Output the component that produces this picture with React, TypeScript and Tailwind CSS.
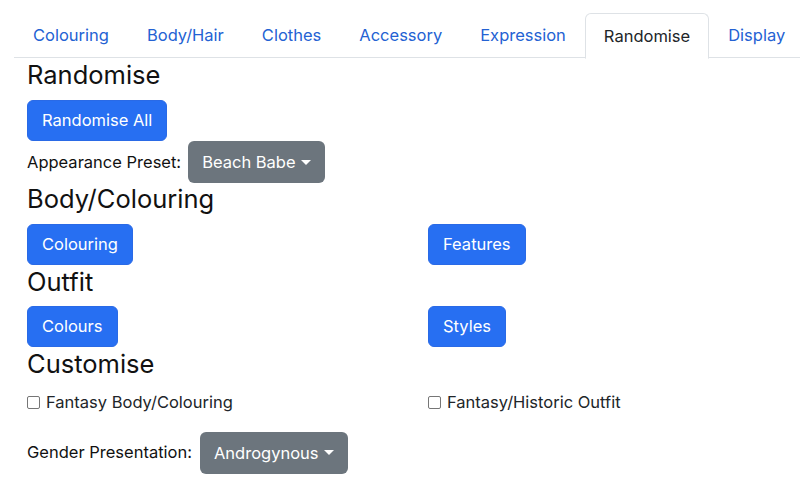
import React from "react";

const tabs = ["Colouring", "Body/Hair", "Clothes", "Accessory", "Expression", "Randomise", "Display"];

function Btn({ children }: { children: React.ReactNode }) {
  return (
    <button className="h-[41px] px-[14px] rounded-[6px] bg-[#276ff2] border border-[#2a6ae6] text-white text-[16.5px] leading-none">
      {children}
    </button>
  );
}

function Drop({ children }: { children: React.ReactNode }) {
  return (
    <button className="h-[42px] px-[14px] rounded-[6px] bg-[#6c757d] text-white text-[16.5px] leading-none flex items-center">
      {children}
      <span className="ml-[5px] inline-block w-0 h-0 border-l-[5px] border-r-[5px] border-t-[5px] border-l-transparent border-r-transparent border-t-white" />
    </button>
  );
}

function Check({ label }: { label: string }) {
  return (
    <label className="flex items-center text-[16.5px] text-[#212529]">
      <span className="w-[13px] h-[13px] border border-[#767676] rounded-[2px] mr-[6px] bg-white" />
      {label}
    </label>
  );
}

export default function App() {
  return (
    <div className="w-[800px] h-[490px] bg-white overflow-hidden pt-[13px] pl-[14px]" style={{ fontFamily: "Inter, 'Liberation Sans', sans-serif" }}>
      <div className="flex border-b border-[#dee2e6] h-[45px]">
        {tabs.map((t) => (
          <div
            key={t}
            className={
              t === "Randomise"
                ? "h-[46px] px-[18px] flex items-center text-[16.5px] text-[#212529] bg-white border border-[#dee2e6] border-b-white rounded-t-[6px]"
                : "h-[45px] px-[19px] flex items-center text-[16.5px] text-[#2462d3]"
            }
          >
            {t}
          </div>
        ))}
      </div>
      <div className="pl-[13px] text-[#111]">
        <h3 className="text-[25.5px] leading-[32px] mt-[1px]">Randomise</h3>
        <div className="mt-[9px]">
          <Btn>Randomise All</Btn>
        </div>
        <div className="flex items-center">
          <span className="text-[16.5px] mr-[7px]">Appearance Preset:</span>
          <Drop>Beach Babe</Drop>
        </div>
        <h3 className="text-[25.5px] leading-[32px]">Body/Colouring</h3>
        <div className="grid grid-cols-[401px_1fr] mt-[9px]">
          <div><Btn>Colouring</Btn></div>
          <div><Btn>Features</Btn></div>
        </div>
        <h3 className="text-[25.5px] leading-[32px] mt-[1px]">Outfit</h3>
        <div className="grid grid-cols-[401px_1fr] mt-[8px]">
          <div><Btn>Colours</Btn></div>
          <div><Btn>Styles</Btn></div>
        </div>
        <h3 className="text-[25.5px] leading-[32px] mt-[1px]">Customise</h3>
        <div className="grid grid-cols-[401px_1fr] mt-[10px]">
          <Check label="Fantasy Body/Colouring" />
          <Check label="Fantasy/Historic Outfit" />
        </div>
        <div className="flex items-center mt-[17px]">
          <span className="text-[16.5px] mr-[8px]">Gender Presentation:</span>
          <Drop>Androgynous</Drop>
        </div>
      </div>
    </div>
  );
}
